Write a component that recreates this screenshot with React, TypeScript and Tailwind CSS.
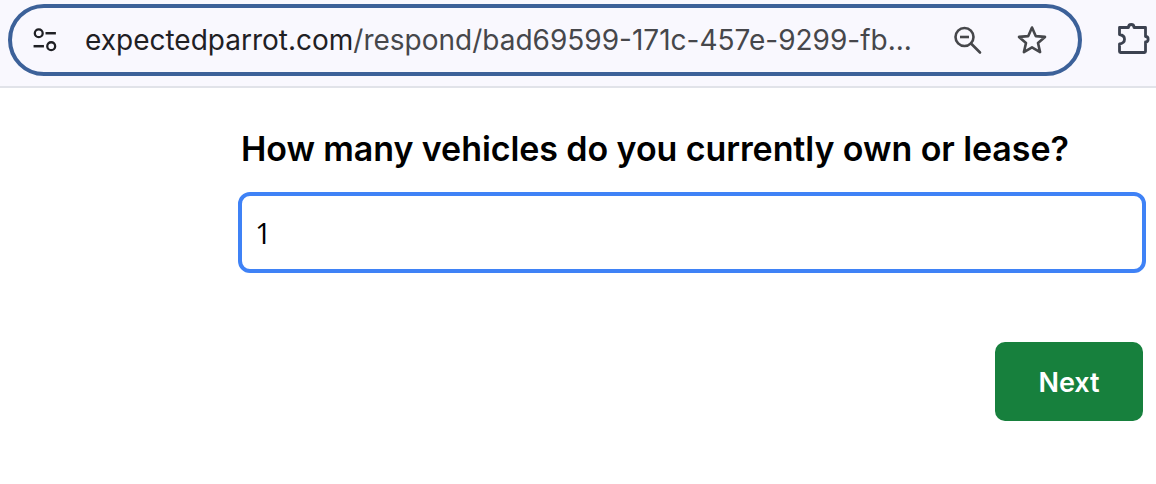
export default function App() {
  return (
    <div className="w-[1156px] h-[484px] bg-white overflow-hidden font-['Inter',sans-serif]">
      <header className="h-[88px] bg-[#f9f8fe] border-b-2 border-[#e1e3e9] flex items-start pl-2 pt-1">
        <div className="w-[1074px] h-[72px] rounded-full border-4 border-[#3c6199] flex items-center pl-[20px] pr-[30px]">
          <svg width="27" height="27" viewBox="0 0 26 26" className="shrink-0 text-[#1f2024]" fill="none" stroke="currentColor" strokeWidth="2.200">
            <circle cx="6.500" cy="6" r="3.800" />
            <path d="M13 6h10" strokeWidth="2.400" />
            <path d="M1.500 18.500h10" strokeWidth="2.400" />
            <circle cx="18.500" cy="18.500" r="3.800" />
          </svg>
          <div className="ml-[26px] text-[28px] leading-none text-[#46474b] whitespace-nowrap flex-1">
            <span className="text-[#1f2024]">expectedparrot.com</span>/respond/bad69599-171c-457e-9299-fb...
          </div>
          <svg width="30" height="30" viewBox="0 0 30 30" className="shrink-0 -ml-[1px] text-[#46474b]" fill="none" stroke="currentColor" strokeWidth="2.600">
            <circle cx="12.500" cy="12" r="9" />
            <path d="M8 12h9" />
            <path d="M19 18.500l9 9" strokeLinecap="round" />
          </svg>
          <svg width="32" height="32" viewBox="0 0 32 32" className="ml-[34px] shrink-0 text-[#46474b]" fill="none" stroke="currentColor" strokeWidth="2.600" strokeLinejoin="round">
            <path d="M16 3.500l3.700 8.600 9.300.8-7 6.100 2.100 9.100-8.100-4.800-8.100 4.800 2.100-9.100-7-6.100 9.300-.8z" />
          </svg>
        </div>
        <svg width="36" height="36" viewBox="0 0 36 36" className="ml-[34px] mt-[16px] shrink-0 text-[#3c4250]" fill="none" stroke="currentColor" strokeWidth="2.800" strokeLinejoin="round">
          <path d="M3.500 7.500h9c0-4 5.500-4 5.500 0h11.500v9c3.500 0 3.500 5.500 0 5.500v9.500a1 1 0 0 1-1 1h-24a1 1 0 0 1-1-1v-7.500c3.500-.5 5-2.500 5-4.700s-1.500-4.300-5-4.800z" />
        </svg>
      </header>
      <main className="pl-[238px] pr-[10px]">
        <h1 className="mt-[41px] pl-[3px] text-[34px] leading-[40px] font-semibold tracking-[-0.08px] text-black whitespace-nowrap">
          How many vehicles do you currently own or lease?
        </h1>
        <input
          readOnly
          value="1"
          className="block mt-[23px] w-[908px] h-[81px] rounded-[12px] border-4 border-[#3f82f6] px-[13px] text-[29px] text-black outline-none font-['Open_Sans',sans-serif]"
        />
        <div className="mt-[69px] flex justify-end pr-[3px]">
          <button className="w-[148px] h-[79px] rounded-[10px] bg-[#17803d] text-white text-[27px] font-semibold pt-[3px]">
            Next
          </button>
        </div>
      </main>
    </div>
  );
}
